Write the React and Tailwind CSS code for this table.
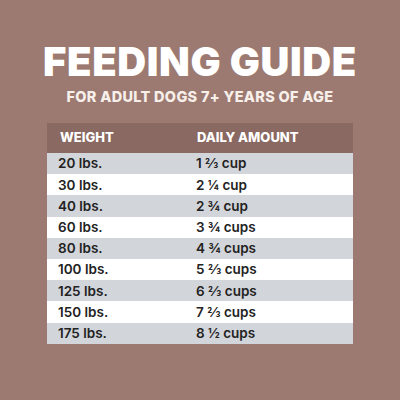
const rows = [
  ["20 lbs.", "1 ⅔ cup"],
  ["30 lbs.", "2 ¼ cup"],
  ["40 lbs.", "2 ¾ cup"],
  ["60 lbs.", "3 ¾ cups"],
  ["80 lbs.", "4 ¾ cups"],
  ["100 lbs.", "5 ⅔ cups"],
  ["125 lbs.", "6 ⅔ cups"],
  ["150 lbs.", "7 ⅔ cups"],
  ["175 lbs.", "8 ½ cups"],
];

export default function App() {
  return (
    <div className="w-[400px] h-[400px] bg-[#9d7a71] flex flex-col items-center font-['Inter',sans-serif]">
      <h1 className="mt-[40px] text-[40px] leading-[44px] font-black text-white tracking-[0.6px]">
        FEEDING GUIDE
      </h1>
      <p className="mt-[4px] text-[14.5px] leading-[18px] font-extrabold text-[#f7efea] tracking-[0.3px]">
        FOR ADULT DOGS 7+ YEARS OF AGE
      </p>
      <div className="mt-[17px] w-[306px] flex flex-col">
        <div className="h-[30px] bg-[#896961] flex items-center text-white text-[13px] font-extrabold">
          <span className="pl-[13px] w-[150px]">WEIGHT</span>
          <span>DAILY AMOUNT</span>
        </div>
        {rows.map(([w, a], i) => (
          <div
            key={w}
            className={
              "h-[21.2px] flex items-center text-[13.5px] font-semibold text-[#222] " +
              (i % 2 === 0 ? "bg-[#d2d5da]" : "bg-white")
            }
          >
            <span className="pl-[11px] w-[149px]">{w}</span>
            <span>{a}</span>
          </div>
        ))}
      </div>
    </div>
  );
}
